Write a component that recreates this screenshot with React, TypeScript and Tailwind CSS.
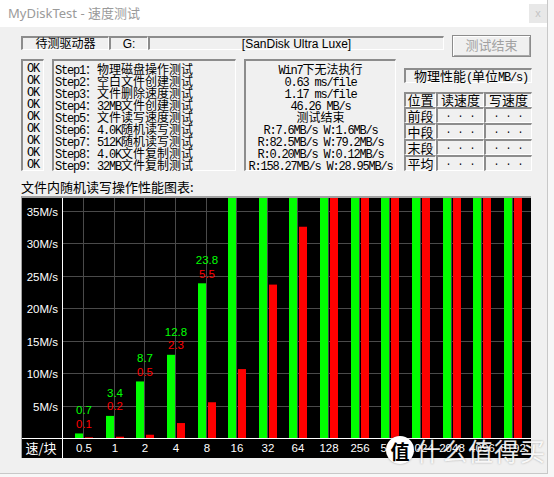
import React from "react"

// ============================================
// MyDiskTest - 速度测试 (window screenshot)
// ============================================

const sunk =
  "border-t-2 border-l-2 border-b border-r border-t-[#8c8c8c] border-l-[#8c8c8c] border-b-white border-r-white"

const steps = [
  "Step1：物理磁盘操作测试",
  "Step2：空白文件创建测试",
  "Step3：文件删除速度测试",
  "Step4：32MB文件创建测试",
  "Step5：文件读写速度测试",
  "Step6：4.0K随机读写测试",
  "Step7：512K随机读写测试",
  "Step8：4.0K文件复制测试",
  "Step9：32MB文件复制测试",
]

const results = [
  "Win7下无法执行",
  "0.63 ms/file",
  "1.17 ms/file",
  "46.26 MB/s",
  "测试结束",
  "R:7.6MB/s W:1.6MB/s",
  "R:82.5MB/s W:79.2MB/s",
  "R:0.20MB/s W:0.12MB/s",
  "R:158.27MB/s W:28.95MB/s",
]

const rows = ["前段", "中段", "末段", "平均"]

// read / write en MB/s (99 = hors graphe)
const bars = [
  { l: "0.5", r: 0.7, w: 0.1 },
  { l: "1", r: 3.4, w: 0.2 },
  { l: "2", r: 8.7, w: 0.5 },
  { l: "4", r: 12.8, w: 2.3 },
  { l: "8", r: 23.8, w: 5.5 },
  { l: "16", r: 99, w: 10.6 },
  { l: "32", r: 99, w: 23.6 },
  { l: "64", r: 99, w: 32.5 },
  { l: "128", r: 99, w: 99 },
  { l: "256", r: 99, w: 99 },
  { l: "512", r: 99, w: 99 },
  { l: "1024", r: 99, w: 99 },
  { l: "2048", r: 99, w: 99 },
  { l: "4096", r: 99, w: 99 },
  { l: "8192", r: 99, w: 99 },
]

// texte mixte : ASCII en monospace étroit, CJK en Noto
function Txt({ s }: { s: string }) {
  const parts = s.split(/([\x00-\x7f]+)/).filter(Boolean)
  return (
    <>
      {parts.map((p, i) =>
        /^[\x00-\x7f]+$/.test(p) ? (
          <span key={i} className="font-['Liberation_Mono',monospace] text-[12px] tracking-[-1.2px]">
            {p}
          </span>
        ) : (
          <span key={i}>{p}</span>
        )
      )}
    </>
  )
}

function Chart() {
  const W = 509
  const H = 260
  const AX = 40
  const AY = 240
  const K = 6.5
  const G0 = 61
  const STEP = 30.64
  const gx = (i: number) => Math.round(G0 + i * STEP)
  const sans = "'Liberation Sans', Arial, sans-serif"

  return (
    <svg width={W} height={H} className="block">
      <rect x={0} y={0} width={W} height={H} fill="#000" />
      {/* grille */}
      {bars.map((_, i) => (
        <line key={"v" + i} x1={gx(i) + 0.5} y1={0} x2={gx(i) + 0.5} y2={AY} stroke="#4a4a4a" />
      ))}
      {[5, 10, 15, 20, 25, 30, 35].map((v) => {
        const y = Math.round(AY - v * K) + 0.5
        return (
          <g key={"h" + v}>
            <line x1={AX} y1={y} x2={W} y2={y} stroke="#4a4a4a" />
            <text x={36} y={y + 4} textAnchor="end" fill="#fff" fontSize="11.5" fontFamily={sans}>
              {v}M/s
            </text>
          </g>
        )
      })}
      {/* barres */}
      {bars.map((b, i) => {
        const g = gx(i)
        const gTop = Math.max(0, AY - b.r * K)
        const rTop = Math.max(0, AY - b.w * K)
        return (
          <g key={"b" + i}>
            <rect x={g - 8} y={gTop} width={8} height={AY - gTop} fill="#00ff00" />
            <rect x={g + 2} y={rTop} width={8} height={AY - rTop} fill="#ff0000" />
            {b.r < 30 && (
              <>
                <text x={g + 1} y={gTop - 19} textAnchor="middle" fill="#00ff00" fontSize="11.5" fontFamily={sans}>
                  {b.r}
                </text>
                <text x={g + 1} y={gTop - 5.5} textAnchor="middle" fill="#ff0000" fontSize="11.5" fontFamily={sans}>
                  {b.w}
                </text>
              </>
            )}
            <text x={g + 1} y={254} textAnchor="middle" fill="#fff" fontSize="11.5" fontFamily={sans}>
              {b.l}
            </text>
          </g>
        )
      })}
      {/* axes */}
      <line x1={AX + 0.5} y1={0} x2={AX + 0.5} y2={H} stroke="#fff" />
      <line x1={0} y1={AY + 0.5} x2={W} y2={AY + 0.5} stroke="#fff" />
      <text x={19} y={255} textAnchor="middle" fill="#fff" fontSize="13" fontFamily="'Noto Sans CJK SC', sans-serif">
        速/块
      </text>
    </svg>
  )
}

export default function App() {
  return (
    <div className="relative w-[554px] h-[477px] bg-[#f7f7f7] overflow-hidden font-['Liberation_Sans','Noto_Sans_CJK_SC',sans-serif]">
      <div className="w-[548px] h-[474px] bg-[#f0f0f0] border-r border-b border-[#c8c8c8]">
        {/* Barre de titre */}
        <div className="h-[27px] bg-white flex items-start justify-between">
          <span className="pl-[8px] pt-[4px] text-[13px] leading-[18px] text-[#9a9a9a] font-['Noto_Sans','Noto_Sans_CJK_SC',sans-serif]">
            MyDiskTest - 速度测试
          </span>
          <div className="mt-[4px] w-[18px] h-[19px] bg-[#e8e8e8] flex items-center justify-center text-[11px] leading-none text-[#c4c4c4]">
            x
          </div>
        </div>

        <div className="pl-[21px]">
          {/* Ligne du disque */}
          <div className="flex items-start mt-[8px]">
            <div className="flex mt-[1px] h-[14px] text-[12px] leading-[10px] text-black">
              <div className={`${sunk} w-[88px] flex items-center justify-center`}>待测驱动器</div>
              <div className={`${sunk} w-[39px] flex items-center justify-center`}>G:</div>
              <div className={`${sunk} w-[296px] flex items-center justify-center`}>[SanDisk Ultra Luxe]</div>
            </div>
            <div className="ml-[8px] w-[79px] h-[22px] border border-[#8c8c8c] shadow-[inset_1px_1px_0_#ffffff,inset_-1px_-1px_0_#a8a8a8] flex items-center justify-center text-[13px] text-[#a0a0a0]">
              测试结束
            </div>
          </div>

          {/* Étapes et résultats */}
          <div className="flex gap-[8px] mt-[2px] h-[112px] text-[12px] leading-[12px] text-black font-['Noto_Sans_CJK_SC',sans-serif]">
            <div className={`${sunk} w-[23px] pt-[2px] flex flex-col items-center`}>
              {steps.map((_, i) => (
                <div key={i} className="h-[12px] font-['Liberation_Mono',monospace] text-[12px] tracking-[-1.2px]">
                  OK
                </div>
              ))}
            </div>
            <div className={`${sunk} w-[184px] pt-[2px] pl-[1px] whitespace-nowrap`}>
              {steps.map((s) => (
                <div key={s} className="h-[12px]">
                  <Txt s={s} />
                </div>
              ))}
            </div>
            <div className={`${sunk} w-[152px] pt-[2px] text-center whitespace-nowrap`}>
              {results.map((s) => (
                <div key={s} className="h-[12px]">
                  <Txt s={s} />
                </div>
              ))}
            </div>
            <div className="w-[128px] pt-[9px]">
              <div className={`${sunk} h-[15px] pl-[8px] text-[13px] leading-[12px] whitespace-nowrap`}>
                <Txt s="物理性能(单位MB/s)" />
              </div>
              <div className="mt-[9px] grid grid-cols-[32px_48px_48px] grid-rows-[15px_16px_16px_16px_16px] text-[13px] leading-[12px]">
                {["位置", "读速度", "写速度"].map((h) => (
                  <div key={h} className={`${sunk} flex items-center justify-center`}>
                    {h}
                  </div>
                ))}
                {rows.map((r) => (
                  <React.Fragment key={r}>
                    <div className={`${sunk} flex items-center justify-center`}>{r}</div>
                    <div className={`${sunk} flex items-end justify-center pb-[2px] text-[10px] leading-[10px] font-['Liberation_Mono',monospace]`}>
                      . . .
                    </div>
                    <div className={`${sunk} flex items-end justify-center pb-[2px] text-[10px] leading-[10px] font-['Liberation_Mono',monospace]`}>
                      . . .
                    </div>
                  </React.Fragment>
                ))}
              </div>
            </div>
          </div>

          {/* Graphique */}
          <div className="mt-[8px] h-[16px] text-[13px] leading-[16px] text-black font-['Noto_Sans_CJK_SC',sans-serif]">
            文件内随机读写操作性能图表:
          </div>
          <div className="mt-[1px] w-[510px] h-[262px] border-t-2 border-l border-t-[#a0a0a0] border-l-[#a0a0a0] bg-black">
            <Chart />
          </div>
        </div>
      </div>

      {/* Filigrane */}
      <div className="absolute left-[386px] top-[436px] flex items-center gap-[2px] pointer-events-none">
        <div className="w-[28px] h-[28px] rounded-full bg-white flex items-center justify-center text-[19px] font-bold leading-none text-black font-['Noto_Sans_CJK_SC',sans-serif] shadow-[0_0_2px_rgba(0,0,0,0.4)]">
          值
        </div>
        <span className="text-[25px] leading-[28px] tracking-[1px] text-white/90 font-['Noto_Sans_CJK_SC',sans-serif] [text-shadow:0_0_2px_rgba(0,0,0,0.35)]">
          什么值得买
        </span>
      </div>
    </div>
  )
}
